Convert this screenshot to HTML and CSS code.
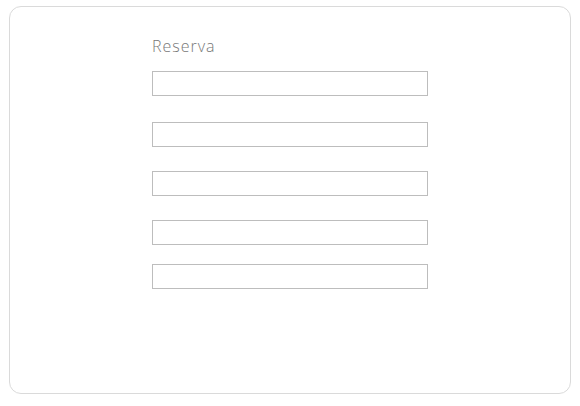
FILE: index.html
```html
<!DOCTYPE html>
<html lang="es">
<head>
<meta charset="utf-8">
<link rel="stylesheet" href="styles.css">
</head>
<body>
<div class="card">
  <form class="form">
    <label class="title">Reserva</label>
    <input class="field f1" type="text">
    <input class="field f2" type="text">
    <input class="field f3" type="text">
    <input class="field f4" type="text">
    <input class="field f5" type="text">
  </form>
</div>
</body>
</html>
```
FILE: styles.css
```css
html, body {
  margin: 0;
  padding: 0;
  background: #ffffff;
}
body {
  padding: 6px 9px 0 9px;
  font-family: "Open Sans", "Liberation Sans", sans-serif;
}
.card {
  box-sizing: border-box;
  width: 562px;
  height: 388px;
  border: 1px solid #dadada;
  border-radius: 12px;
  background: #ffffff;
  padding: 28px 0 0 142px;
}
.form {
  display: flex;
  flex-direction: column;
  width: 276px;
}
.title {
  font-size: 16px;
  font-weight: 300;
  line-height: 22px;
  color: #777777;
  height: 22px;
  letter-spacing: 1px;
}
.field {
  box-sizing: border-box;
  width: 276px;
  height: 25px;
  margin: 0;
  padding: 0;
  border: 1px solid #bdbdbd;
  border-radius: 0;
  background: #fff;
  outline: none;
}
.f1 { margin-top: 14px; }
.f2 { margin-top: 26px; }
.f3 { margin-top: 24px; }
.f4 { margin-top: 24px; }
.f5 { margin-top: 19px; }
```
